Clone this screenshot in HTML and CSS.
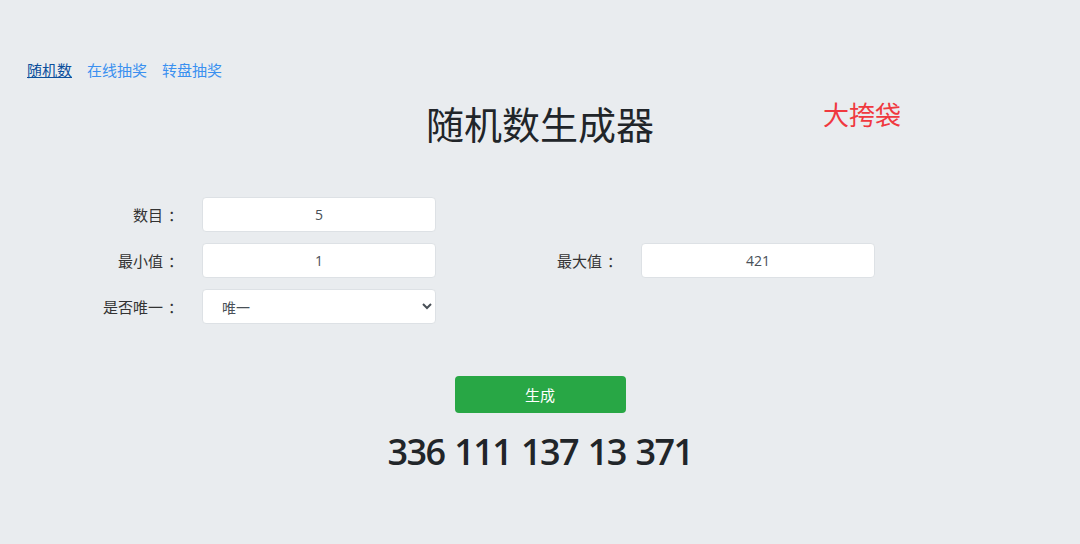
FILE: index.html
```html
<!DOCTYPE html>
<html lang="zh-CN">
<head>
    <meta charset="UTF-8">
    <title>随机数生成器</title>
    <link rel="stylesheet" href="styles.css">
</head>
<body>
<nav class="nav">
    <a href="#" class="active">随机数</a>
    <a href="#">在线抽奖</a>
    <a href="#">转盘抽奖</a>
</nav>
<header class="head">
    <h1 class="title">随机数生成器</h1>
    <div class="brand">大挎袋</div>
</header>
<form class="form">
    <label>数目<span class="colon">：</span></label>
    <input class="ipt" value="5">
    <span></span><span></span>
    <label>最小值<span class="colon">：</span></label>
    <input class="ipt" value="1">
    <label>最大值<span class="colon">：</span></label>
    <input class="ipt" value="421">
    <label>是否唯一<span class="colon">：</span></label>
    <select class="ipt sel">
        <option>唯一</option>
        <option>不唯一</option>
    </select>
</form>
<div class="action">
    <button class="btn-gen" type="button">生成</button>
    <div class="result">336 111 137 13 371</div>
</div>
</body>
</html>
```
FILE: styles.css
```css
body {
    margin: 0;
    background: #e9ecef;
    color: #212529;
    font-family: "Noto Sans CJK SC", "Noto Sans", sans-serif;
    font-size: 15px;
}

.nav {
    display: flex;
    gap: 15px;
    padding: 59px 0 0 27px;
    line-height: 22px;
}

.nav a {
    color: #3a90f0;
    text-decoration: none;
}

.nav a.active {
    color: #0b4f9c;
    text-decoration: underline;
}

.head {
    display: grid;
    grid-template-columns: 1fr auto 1fr;
    margin-top: 14px;
}

.title {
    grid-column: 2;
    margin: 0;
    font-size: 38px;
    font-weight: 400;
    line-height: 56px;
}

.brand {
    padding: 1px 0 0 169px;
    font-size: 26px;
    color: #f0393f;
    line-height: 36px;
}

.form {
    display: grid;
    grid-template-columns: 98px 234px 157px 234px;
    grid-auto-rows: 35px;
    column-gap: 24px;
    row-gap: 11px;
    margin: 46px 0 0 80px;
}

.form label {
    text-align: right;
    line-height: 35px;
    color: #333;
}

.colon {
    padding-left: 5px;
    margin-right: -5px;
}

.ipt {
    box-sizing: border-box;
    height: 35px;
    border: 1px solid #dde1e5;
    border-radius: 4px;
    background: #fff;
    color: #495057;
    font-family: "Open Sans", "Noto Sans CJK SC", sans-serif;
    font-size: 14px;
    text-align: center;
}

.sel {
    text-align: left;
    padding: 0 8px 0 15px;
    font-family: "Noto Sans CJK SC", sans-serif;
}

.action {
    display: flex;
    flex-direction: column;
    align-items: center;
    margin-top: 52px;
}

.btn-gen {
    width: 171px;
    height: 37px;
    border: 0;
    border-radius: 4px;
    background: #28a745;
    color: #fff;
    font-family: "Noto Sans CJK SC", sans-serif;
    font-size: 15px;
}

.result {
    margin-top: 14px;
    font-family: "Open Sans", sans-serif;
    font-size: 36px;
    font-weight: 600;
    letter-spacing: -1.6px;
    word-spacing: 2px;
    line-height: 50px;
}
```
